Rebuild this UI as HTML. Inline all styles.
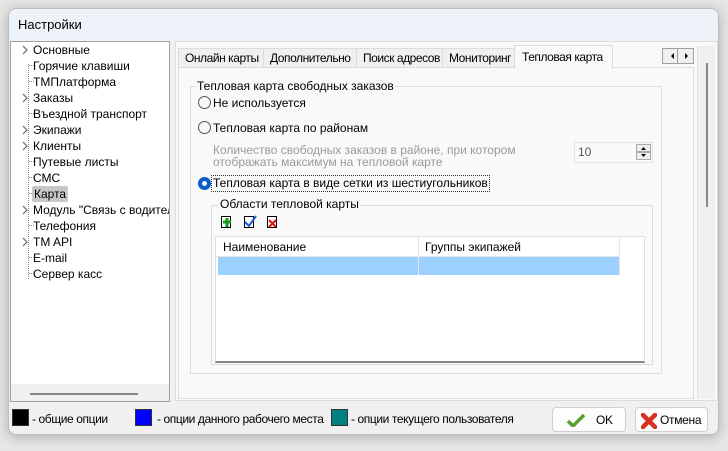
<!DOCTYPE html>
<html><head><meta charset="utf-8"><style>
*{box-sizing:border-box;margin:0;padding:0}
body{width:728px;height:451px;background:#e6e6e6;font-family:"Liberation Sans","Noto Sans CJK SC",sans-serif;font-size:12px;color:#000;position:relative;overflow:hidden}
.a{position:absolute;white-space:nowrap}
.win{position:absolute;left:8px;top:8px;width:711px;height:427px;background:#f0f0f0;border:1px solid #bdbdbd;border-radius:8px;box-shadow:0 2px 12px rgba(0,0,0,.25);overflow:hidden}
.tb{position:absolute;left:0;top:0;width:100%;height:32px;background:#eef3f9}
.tree{position:absolute;left:1px;top:32px;width:160px;height:361px;background:#fff;border:1px solid #a0a0a0;overflow:hidden}
.ti{position:absolute;left:22px;height:16px;line-height:16px;white-space:nowrap}
.rad{position:absolute;width:13px;height:13px;border:1px solid #555;border-radius:50%;background:#f8f8f8}
.tab{position:absolute;top:48px;height:20px;line-height:19px;border:1px solid #dcdcdc;border-bottom:none;background:#f0f0f0;padding-left:6px;white-space:nowrap;overflow:hidden;letter-spacing:-.45px}
.gr{color:#9a9a9a}
.sq{position:absolute;top:409px;width:17px;height:17px;border:1px solid #333}
.btn{position:absolute;top:407px;height:25px;border:1px solid #cfcfcf;border-radius:4px;background:#fdfdfd;letter-spacing:-.3px}
</style></head><body>
<div class="win">
 <div class="tb"></div>
 <div class="a" style="left:9px;top:8px;font-size:13px">Настройки</div>
 <div class="tree">
  <svg class="a" style="left:0;top:0" width="30" height="250">
   <g stroke="#888" stroke-dasharray="1,1" fill="none">
    <line x1="17.5" y1="22" x2="17.5" y2="238"/>
    <line x1="18" y1="23.5" x2="24" y2="23.5"/><line x1="18" y1="39.5" x2="24" y2="39.5"/>
    <line x1="18" y1="71.5" x2="24" y2="71.5"/><line x1="18" y1="119.5" x2="24" y2="119.5"/>
    <line x1="18" y1="135.5" x2="24" y2="135.5"/><line x1="18" y1="151.5" x2="24" y2="151.5"/>
    <line x1="18" y1="183.5" x2="24" y2="183.5"/><line x1="18" y1="215.5" x2="24" y2="215.5"/>
    <line x1="18" y1="231.5" x2="24" y2="231.5"/>
   </g>
   <g stroke="#777" stroke-width="1.3" fill="none">
    <path d="M12 4l4 4-4 4"/><path d="M12 52l4 4-4 4"/><path d="M12 84l4 4-4 4"/><path d="M12 100l4 4-4 4"/><path d="M12 164l4 4-4 4"/><path d="M12 196l4 4-4 4"/>
   </g>
  </svg>
  <div class="ti" style="top:0">Основные</div>
  <div class="ti" style="top:16px">Горячие клавиши</div>
  <div class="ti" style="top:32px">ТМПлатформа</div>
  <div class="ti" style="top:48px">Заказы</div>
  <div class="ti" style="top:64px">Въездной транспорт</div>
  <div class="ti" style="top:80px">Экипажи</div>
  <div class="ti" style="top:96px">Клиенты</div>
  <div class="ti" style="top:112px">Путевые листы</div>
  <div class="ti" style="top:128px">СМС</div>
  <div class="ti" style="top:144px;left:21px;background:#c8c8c8;border-radius:2px;padding:0 2px">Карта</div>
  <div class="ti" style="top:160px">Модуль "Связь с водителя</div>
  <div class="ti" style="top:176px">Телефония</div>
  <div class="ti" style="top:192px">TM API</div>
  <div class="ti" style="top:208px">E-mail</div>
  <div class="ti" style="top:224px">Сервер касс</div>
  <div class="a" style="left:0;top:342px;width:158px;height:17px;background:#f0f0f0"></div>
  <div class="a" style="left:19px;top:351px;width:108px;height:2px;background:#888"></div>
 </div>
 <div class="a" style="left:166px;top:32px;width:543px;height:360px;background:#f9f9f9;border:1px solid #dcdcdc"></div>
 <div class="a" style="left:688px;top:37px;width:18px;height:353px;background:#f0f0f0;border-left:1px solid #e4e4e4"></div>
 <div class="a" style="left:697px;top:54px;width:2px;height:144px;background:#888"></div>
</div>
<div class="tab" style="left:178px;width:86px">Онлайн карты</div>
<div class="tab" style="left:263px;width:94px">Дополнительно</div>
<div class="tab" style="left:356px;width:87px">Поиск адресов</div>
<div class="tab" style="left:442px;width:73px">Мониторинг</div>
<div class="tab" style="left:514px;top:45px;height:24px;width:99px;background:#f9f9f9;line-height:23px;padding-left:7px">Тепловая карта</div>
<div class="a" style="left:178px;top:67px;width:516px;height:332px;border:1px solid #dcdcdc;border-top:none"></div>
<div class="a" style="left:178px;top:67px;width:337px;height:1px;background:#dcdcdc"></div>
<div class="a" style="left:612px;top:67px;width:82px;height:1px;background:#dcdcdc"></div>
<div class="a" style="left:662px;top:48px;width:32px;height:16px;border:1px solid #a0a0a0;background:#f0f0f0"></div>
<div class="a" style="left:677px;top:48px;width:1px;height:16px;background:#a0a0a0"></div>
<svg class="a" style="left:662px;top:48px" width="32" height="16"><path d="M9 8l3-3v6z M23 5l3 3-3 3z" fill="#000"/></svg>
<div class="a" style="left:190px;top:86px;width:472px;height:288px;border:1px solid #dcdcdc"></div>
<div class="a" style="left:196px;top:79px;background:#f9f9f9;padding:0 1px">Тепловая карта свободных заказов</div>
<div class="rad" style="left:198px;top:96px"></div>
<div class="a" style="left:213px;top:96px">Не используется</div>
<div class="rad" style="left:198px;top:121px"></div>
<div class="a" style="left:213px;top:121px">Тепловая карта по районам</div>
<div class="a gr" style="left:213px;top:143px">Количество свободных заказов в районе, при котором</div>
<div class="a gr" style="left:213px;top:155px">отображать максимум на тепловой карте</div>
<div class="a" style="left:574px;top:142px;width:79px;height:21px;border:1px solid #e4e4e4;background:#fafafa"></div>
<div class="a" style="left:578px;top:145px;color:#555">10</div>
<svg class="a" style="left:636px;top:144px" width="16" height="17"><rect x=".5" y=".5" width="14" height="7" fill="#f0f0f0" stroke="#aaa"/><rect x=".5" y="8.5" width="14" height="7" fill="#f0f0f0" stroke="#aaa"/><path d="M5 6h5l-2.5-3z M5 10h5l-2.5 3z" fill="#000"/></svg>
<div class="rad" style="left:198px;top:177px;border:4px solid #0a5cc8;background:#fff"></div>
<div class="a" style="left:211px;top:175px;border:1px dotted #333;padding:0 1px;line-height:15px">Тепловая карта в виде сетки из шестиугольников</div>
<div class="a" style="left:211px;top:205px;width:442px;height:160px;border:1px solid #dcdcdc"></div>
<div class="a" style="left:219px;top:197px;background:#f9f9f9;padding:0 1px">Области тепловой карты</div>
<svg class="a" style="left:220px;top:215px" width="60" height="15">
 <rect x="1.5" y="1.5" width="9" height="11" fill="#fff" stroke="#000"/><path d="M3 7h8M7 3v9" stroke="#1a9a1a" stroke-width="3"/>
 <rect x="24.5" y="1.5" width="9" height="11" fill="#fff" stroke="#000"/><path d="M25 7l4 4 7-10" stroke="#1a5ad8" stroke-width="2" fill="none"/>
 <rect x="47.5" y="1.5" width="9" height="11" fill="#fff" stroke="#000"/><path d="M49 5l7 7M56 5l-7 7" stroke="#e01010" stroke-width="2"/>
</svg>
<div class="a" style="left:215px;top:236px;width:430px;height:127px;background:#fff;border:1px solid #e0e0e0;border-bottom:2px solid #888"></div>
<div class="a" style="left:418px;top:237px;width:1px;height:37px;background:#e6e6e6"></div>
<div class="a" style="left:619px;top:237px;width:1px;height:38px;background:#e6e6e6"></div>
<div class="a" style="left:216px;top:256px;width:403px;height:1px;background:#e6e6e6"></div>
<div class="a" style="left:218px;top:257px;width:200px;height:18px;background:#9cd0fe"></div>
<div class="a" style="left:419px;top:257px;width:200px;height:18px;background:#9cd0fe"></div>
<div class="a" style="left:223px;top:240px">Наименование</div>
<div class="a" style="left:425px;top:240px">Группы экипажей</div>
<div class="sq" style="left:12px;background:#000"></div>
<div class="a" style="left:32px;top:412px;letter-spacing:-.4px">- общие опции</div>
<div class="sq" style="left:135px;background:#0000ff"></div>
<div class="a" style="left:157px;top:412px;letter-spacing:-.4px">- опции данного рабочего места</div>
<div class="sq" style="left:331px;background:#008080"></div>
<div class="a" style="left:351px;top:412px;letter-spacing:-.4px">- опции текущего пользователя</div>
<div class="btn" style="left:552px;width:74px"><svg class="a" style="left:14px;top:6px" width="18" height="13"><path d="M1 7l5 5L17 1" stroke="#5aa02c" stroke-width="3.5" fill="none"/></svg><span class="a" style="left:43px;top:5px">OK</span></div>
<div class="btn" style="left:635px;width:73px"><svg class="a" style="left:5px;top:5px" width="16" height="16"><path d="M2 2l12 12M14 2L2 14" stroke="#d83020" stroke-width="4.5" stroke-linecap="round"/></svg><span class="a" style="left:24px;top:5px">Отмена</span></div>
</body></html>
